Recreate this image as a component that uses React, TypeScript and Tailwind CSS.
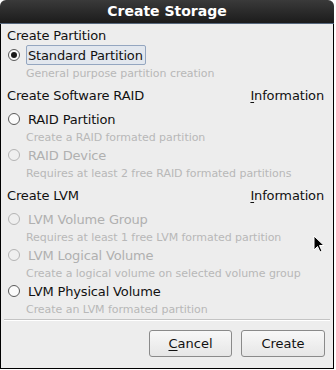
import React from "react";

const Radio = ({ checked, disabled }: { checked?: boolean; disabled?: boolean }) => (
  <svg width="14" height="14" viewBox="0 0 14 14" className="shrink-0">
    <circle cx="7" cy="7" r="5.5" fill={disabled ? "#efefef" : "#fbfbfb"} stroke={disabled ? "#b4b4b4" : "#5a5a5a"} strokeWidth="1" />
    {checked && <circle cx="7" cy="7" r="3" fill="#1a1a1a" />}
  </svg>
);

const Option = ({
  label,
  desc,
  checked,
  disabled,
  focused,
}: {
  label: string;
  desc: string;
  checked?: boolean;
  disabled?: boolean;
  focused?: boolean;
}) => (
  <div className="flex flex-col">
    <div className="flex items-center h-[20px] pl-[6px]">
      <Radio checked={checked} disabled={disabled} />
      <span
        className={`ml-[5px] pl-[1px] pr-[2px] h-[20px] flex items-center text-[13px] leading-none tracking-[-0.15px] ${
          focused ? "border border-[#94a6c0] bg-[#e2e7ee] rounded-[2px]" : "border border-transparent"
        } ${disabled ? "text-[#b0b0b0]" : "text-[#111]"}`}
      >
        {label}
      </span>
    </div>
    <div className="h-[16px] pl-[25px] flex items-center text-[11px] text-[#b8b8b8] leading-none tracking-[-0.05px]">{desc}</div>
  </div>
);

const Header = ({ title, info }: { title: string; info?: boolean }) => (
  <div className="flex items-center justify-between h-[20px] pl-[6px] pr-[9px] text-[13px] text-[#111] leading-none tracking-[-0.15px]">
    <span>{title}</span>
    {info && (
      <span>
        <span className="underline underline-offset-2">I</span>nformation
      </span>
    )}
  </div>
);

export default function App() {
  return (
    <div
      className="w-[336px] h-[370px] bg-white relative overflow-hidden"
      style={{ fontFamily: '"DejaVu Sans", Verdana, sans-serif' }}
    >
      <div className="w-[334px] h-[369px] flex flex-col border-b border-black">
        <div className="h-[24px] shrink-0 rounded-t-[6px] bg-gradient-to-b from-[#3a3a3a] to-[#1c1c1c] border-b border-[#56677d] flex items-center justify-center text-white font-bold text-[14px]">
          Create Storage
        </div>
        <div className="flex-1 flex flex-col bg-[#ededed] border-l border-r border-black">
          <div className="pt-[1px]">
            <Header title="Create Partition" />
            <Option label="Standard Partition" desc="General purpose partition creation" checked focused />
            <div className="h-[4px]" />
            <Header title="Create Software RAID" info />
            <div className="h-[4px]" />
            <Option label="RAID Partition" desc="Create a RAID formated partition" />
            <Option label="RAID Device" desc="Requires at least 2 free RAID formated partitions" disabled />
            <div className="h-[4px]" />
            <Header title="Create LVM" info />
            <div className="h-[4px]" />
            <Option label="LVM Volume Group" desc="Requires at least 1 free LVM formated partition" disabled />
            <Option label="LVM Logical Volume" desc="Create a logical volume on selected volume group" disabled />
            <Option label="LVM Physical Volume" desc="Create an LVM formated partition" />
          </div>
          <div className="mx-[3px] mt-[2px] h-[2px] border-t border-[#c4c4c4] border-b border-b-white" />
          <div className="flex justify-end gap-[9px] pr-[8px] pt-[9px]">
            <button className="w-[83px] h-[27px] rounded-[3px] border border-[#8a8a8a] bg-gradient-to-b from-[#f8f8f8] to-[#e6e6e6] text-[13px] text-[#111] flex items-center justify-center">
              <span>
                <span className="underline underline-offset-2">C</span>ancel
              </span>
            </button>
            <button className="w-[84px] h-[27px] rounded-[3px] border border-[#8a8a8a] bg-gradient-to-b from-[#f8f8f8] to-[#e6e6e6] text-[13px] text-[#111] flex items-center justify-center">
              Create
            </button>
          </div>
        </div>
      </div>
      <svg className="absolute left-[313px] top-[235px]" width="14" height="20" viewBox="0 0 14 20">
        <path d="M1 1 L1 15 L4.5 11.5 L7 17 L9 16 L6.5 10.5 L11 10.5 Z" fill="#000" stroke="#fff" strokeWidth="1" />
      </svg>
    </div>
  );
}
